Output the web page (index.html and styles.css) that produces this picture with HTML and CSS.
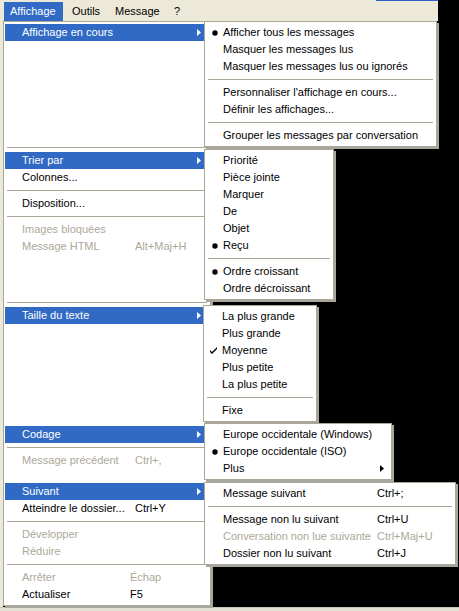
FILE: index.html
```html
<!DOCTYPE html>
<html lang="fr">
<head>
<meta charset="utf-8">
<title>Affichage</title>
<link rel="stylesheet" href="styles.css">
</head>
<body>
<div class="screen">
  <div class="menubar">
    <div class="mb-items">
      <span class="mb-item is-open">Affichage</span>
      <span class="mb-item">Outils</span>
      <span class="mb-item">Message</span>
      <span class="mb-item">?</span>
    </div>
  </div>

  <div class="workspace">
    <div class="frame-left"></div>
    <div class="menu menu-main">
      <div class="item hl"><span class="label">Affichage en cours</span><span class="arrow"><svg width="4" height="7" viewBox="0 0 4 7"><polygon points="0,0 4,3.5 0,7"/></svg></span></div>
      <div class="blank blank-6"></div>
      <div class="sep"></div>
      <div class="item hl"><span class="label">Trier par</span><span class="arrow"><svg width="4" height="7" viewBox="0 0 4 7"><polygon points="0,0 4,3.5 0,7"/></svg></span></div>
      <div class="item"><span class="label">Colonnes...</span></div>
      <div class="sep"></div>
      <div class="item"><span class="label">Disposition...</span></div>
      <div class="sep"></div>
      <div class="item off"><span class="label">Images bloquées</span></div>
      <div class="item off"><span class="label">Message HTML</span><span class="key">Alt+Maj+H</span></div>
      <div class="blank blank-43"></div>
      <div class="sep"></div>
      <div class="item hl"><span class="label">Taille du texte</span><span class="arrow"><svg width="4" height="7" viewBox="0 0 4 7"><polygon points="0,0 4,3.5 0,7"/></svg></span></div>
      <div class="blank blank-6"></div>
      <div class="item hl"><span class="label">Codage</span><span class="arrow"><svg width="4" height="7" viewBox="0 0 4 7"><polygon points="0,0 4,3.5 0,7"/></svg></span></div>
      <div class="sep"></div>
      <div class="item off"><span class="label">Message précédent</span><span class="key">Ctrl+,</span></div>
      <div class="blank blank-14"></div>
      <div class="item hl"><span class="label">Suivant</span><span class="arrow"><svg width="4" height="7" viewBox="0 0 4 7"><polygon points="0,0 4,3.5 0,7"/></svg></span></div>
      <div class="item"><span class="label">Atteindre le dossier...</span><span class="key">Ctrl+Y</span></div>
      <div class="sep"></div>
      <div class="item off"><span class="label">Développer</span></div>
      <div class="item off"><span class="label">Réduire</span></div>
      <div class="sep"></div>
      <div class="item off key-alt"><span class="label">Arrêter</span><span class="key">Échap</span></div>
      <div class="item key-alt"><span class="label">Actualiser</span><span class="key">F5</span></div>
    </div>
    <div class="desk"></div>
  </div>
  <div class="frame-bottom"></div>

  <div class="menu sub sub-view">
    <div class="item"><span class="mark"><svg width="6" height="6" viewBox="0 0 6 6"><circle cx="3" cy="3" r="2.7"/></svg></span><span class="label">Afficher tous les messages</span></div>
    <div class="item"><span class="label">Masquer les messages lus</span></div>
    <div class="item"><span class="label">Masquer les messages lus ou ignorés</span></div>
    <div class="sep"></div>
    <div class="item"><span class="label">Personnaliser l'affichage en cours...</span></div>
    <div class="item"><span class="label">Définir les affichages...</span></div>
    <div class="sep"></div>
    <div class="item"><span class="label">Grouper les messages par conversation</span></div>
  </div>

  <div class="menu sub sub-sort">
    <div class="item"><span class="label">Priorité</span></div>
    <div class="item"><span class="label">Pièce jointe</span></div>
    <div class="item"><span class="label">Marquer</span></div>
    <div class="item"><span class="label">De</span></div>
    <div class="item"><span class="label">Objet</span></div>
    <div class="item"><span class="mark"><svg width="6" height="6" viewBox="0 0 6 6"><circle cx="3" cy="3" r="2.7"/></svg></span><span class="label">Reçu</span></div>
    <div class="sep"></div>
    <div class="item"><span class="mark"><svg width="6" height="6" viewBox="0 0 6 6"><circle cx="3" cy="3" r="2.7"/></svg></span><span class="label">Ordre croissant</span></div>
    <div class="item"><span class="label">Ordre décroissant</span></div>
  </div>

  <div class="menu sub sub-size">
    <div class="item"><span class="label">La plus grande</span></div>
    <div class="item"><span class="label">Plus grande</span></div>
    <div class="item"><span class="mark"><svg width="7" height="7" viewBox="0 0 7 7"><polygon points="0,3 2,5 7,0 7,2 2,7 0,5"/></svg></span><span class="label">Moyenne</span></div>
    <div class="item"><span class="label">Plus petite</span></div>
    <div class="item"><span class="label">La plus petite</span></div>
    <div class="sep"></div>
    <div class="item"><span class="label">Fixe</span></div>
  </div>

  <div class="menu sub sub-enc">
    <div class="item"><span class="label">Europe occidentale (Windows)</span></div>
    <div class="item"><span class="mark"><svg width="6" height="6" viewBox="0 0 6 6"><circle cx="3" cy="3" r="2.7"/></svg></span><span class="label">Europe occidentale (ISO)</span></div>
    <div class="item"><span class="label">Plus</span><span class="arrow"><svg width="4" height="7" viewBox="0 0 4 7"><polygon points="0,0 4,3.5 0,7"/></svg></span></div>
  </div>

  <div class="menu sub sub-next">
    <div class="item"><span class="label">Message suivant</span><span class="key">Ctrl+;</span></div>
    <div class="sep"></div>
    <div class="item"><span class="label">Message non lu suivant</span><span class="key">Ctrl+U</span></div>
    <div class="item off"><span class="label">Conversation non lue suivante</span><span class="key">Ctrl+Maj+U</span></div>
    <div class="item"><span class="label">Dossier non lu suivant</span><span class="key">Ctrl+J</span></div>
  </div>
</div>
</body>
</html>
```
FILE: styles.css
```css
* {
  box-sizing: border-box;
  margin: 0;
  padding: 0;
}

html, body {
  background: #000;
}

body {
  margin: 0;
  font-family: "Liberation Sans", Arial, sans-serif;
  font-size: 11px;
  color: #000;
}

.screen {
  position: relative;
  width: 459px;
  height: 611px;
  overflow: hidden;
  display: flex;
  flex-direction: column;
  background: #000;
}

/* ---------- menu bar ---------- */
.menubar {
  height: 21px;
  display: flex;
}

.mb-items {
  width: 438px;
  height: 21px;
  background: linear-gradient(#2f5fcf, #2f5fcf) no-repeat 376px 0 / 62px 1px, #ece9d8;
  display: grid;
  grid-template-columns: 59px 40px 56px auto;
  column-gap: 3px;
  padding: 2px 0 0 4px;
  align-content: start;
}

.mb-item {
  height: 19px;
  line-height: 18px;
  padding-left: 6px;
  white-space: nowrap;
}

.mb-item.is-open {
  background: #316ac5;
  color: #fff;
}

/* ---------- window area ---------- */
.workspace {
  height: 586px;
  display: flex;
  align-items: flex-start;
}

.frame-left {
  width: 3px;
  align-self: stretch;
  background: #ece9d8;
}

.desk {
  flex: 1;
}

.frame-bottom {
  height: 4px;
  background: #e3e0d4;
  border-top: 1px solid #c9c6ba;
}

/* ---------- menus ---------- */
.menu {
  background: #fff;
  border: 1px solid #aca899;
  padding: 2px 1px;
  box-shadow: 2px 2px 0 #a9a69b;
}

.menu-main {
  width: 208px;
  position: relative;
  z-index: 1;
}

.sub {
  position: absolute;
  z-index: 2;
}

.sub-view { top: 21px;  left: 204px; width: 233px; }
.sub-sort { top: 149px; left: 204px; width: 130px; }
.sub-size { top: 305px; left: 203px; width: 114px; }
.sub-enc  { top: 423px; left: 204px; width: 188px; }
.sub-next { top: 482px; left: 204px; width: 252px; }

.item {
  display: grid;
  grid-template-columns: 17px 1fr;
  height: 17px;
  line-height: 17px;
  white-space: nowrap;
  color: #000;
}

.menu-main .item {
  grid-template-columns: 17px 113px 1fr 12px;
}

.menu-main .item.key-alt {
  grid-template-columns: 17px 108px 1fr 12px;
}

.sub-enc .item {
  grid-template-columns: 17px 1fr 10px;
}

.sub-next .item {
  grid-template-columns: 17px 154px 1fr;
}

.item.hl {
  background: #316ac5;
  color: #fff;
}

.item.off {
  color: #aca899;
}

.mark {
  grid-column: 1;
  grid-row: 1;
  display: flex;
  align-items: center;
  justify-content: center;
}

.label {
  grid-column: 2;
  grid-row: 1;
}

.key {
  grid-column: 3;
  grid-row: 1;
}

.arrow {
  grid-column: -2 / -1;
  grid-row: 1;
  display: flex;
  align-items: center;
}

.mark svg,
.arrow svg {
  display: block;
  fill: currentColor;
}

.sep {
  margin: 4px 2px;
  border-top: 1px solid #aca899;
}

.blank-6  { height: 102px; }
.blank-43 { height: 43px; }
.blank-14 { height: 14px; }
```
